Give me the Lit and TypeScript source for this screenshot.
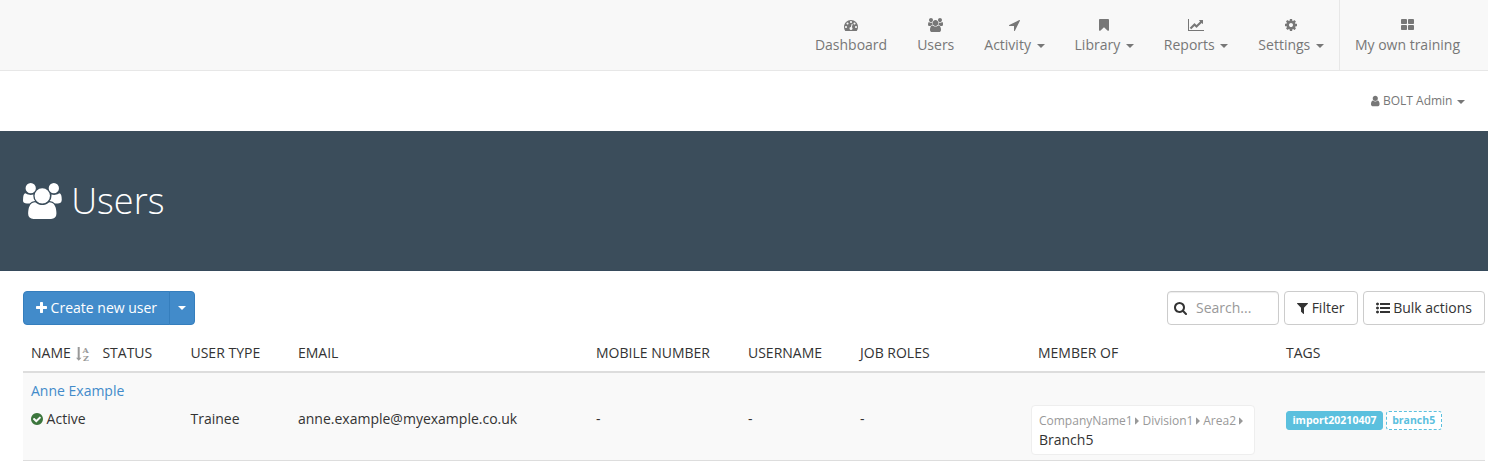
import { LitElement, html, css, svg } from "lit";
import { customElement, property } from "lit/decorators.js";

type Glyph = { box: string; w: number; d: string };

const GLYPHS: Record<string, Glyph> = {
  dashboard: { box: "0 0 1792 1792", w: 1, d: "M384 1152q0-53-37.5-90.5t-90.5-37.5-90.5 37.5-37.5 90.5 37.5 90.5 90.5 37.5 90.5-37.5 37.5-90.5zm192-448q0-53-37.5-90.5t-90.5-37.5-90.5 37.5-37.5 90.5 37.5 90.5 90.5 37.5 90.5-37.5 37.5-90.5zm428 481l101-382q6-26-7.5-48.5t-38.5-29.5-48 6.5-30 39.5l-101 382q-60 5-107 43.5t-63 98.5q-20 77 20 146t117 89 146-20 89-117q16-60-6-117t-72-91zm660-33q0-53-37.5-90.5t-90.5-37.5-90.5 37.5-37.5 90.5 37.5 90.5 90.5 37.5 90.5-37.5 37.5-90.5zm-640-640q0-53-37.5-90.5t-90.5-37.5-90.5 37.5-37.5 90.5 37.5 90.5 90.5 37.5 90.5-37.5 37.5-90.5zm448 192q0-53-37.5-90.5t-90.5-37.5-90.5 37.5-37.5 90.5 37.5 90.5 90.5 37.5 90.5-37.5 37.5-90.5zm320 448q0 261-141 483-19 29-54 29h-1402q-35 0-54-29-141-221-141-483 0-182 71-348t191-286 286-191 348-71 348 71 286 191 191 286 71 348z" },
  users: { box: "64 0 1920 1792", w: 1.0714, d: "M657 896q-162 5-265 128h-134q-82 0-138-40.5t-56-118.5q0-353 124-353 6 0 43.5 21t97.5 42.5 119 21.5q67 0 133-23-5 37-5 66 0 159 93 256zm1071 637q0 120-73 189.5t-194 69.5h-874q-121 0-194-69.5t-73-189.5q0-53 3.5-103.5t14-109 26.5-108.5 43-97.5 62-81 85.5-53.5 111.5-20q10 0 43 21.5t73 48 107 48 135 21.5 135-21.5 107-48 73-48 43-21.5q61 0 111.5 20t85.5 53.5 62 81 43 97.5 26.5 108.5 14 109 3.5 103.5zm-1024-1277q0 106-75 181t-181 75-181-75-75-181 75-181 181-75 181 75 75 181zm704 384q0 159-112.5 271.5t-271.5 112.5-271.5-112.5-112.5-271.5 112.5-271.5 271.5-112.5 271.5 112.5 112.5 271.5zm576 225q0 78-56 118.5t-138 40.5h-134q-103-123-265-128 93-97 93-256 0-29-5-66 66 23 133 23 59 0 119-21.5t97.5-42.5 43.5-21q124 0 124 353zm-128-609q0 106-75 181t-181 75-181-75-75-181 75-181 181-75 181 75 75 181z" },
  arrow: { box: "192 0 1408 1792", w: 0.7857, d: "M1593 349l-640 1280q-17 35-57 35-5 0-15-2-22-5-35.5-22.5t-13.5-39.5v-576h-576q-22 0-39.5-13.5t-22.5-35.5 4-42 29-30l1280-640q13-7 29-7 27 0 45 19 15 14 18.5 34.5t-6.5 39.5z" },
  bookmark: { box: "256 0 1280 1792", w: 0.7143, d: "M1420 128q23 0 44 9 33 13 52.5 41t19.5 62v1289q0 34-19.5 62t-52.5 41q-19 8-44 8-48 0-83-32l-441-424-441 424q-36 33-83 33-23 0-44-9-33-13-52.5-41t-19.5-62v-1289q0-34 19.5-62t52.5-41q21-9 44-9h1048z" },
  chart: { box: "0 0 2048 1792", w: 1.1429, d: "M2048 1536v128h-2048v-1536h128v1408h1920zm-128-1248v435q0 21-19.5 29.5t-35.5-7.5l-121-121-633 633q-10 10-23 10t-23-10l-233-233-416 416-192-192 585-585q10-10 23-10t23 10l233 233 464-464-121-121q-16-16-7.5-35.5t29.5-19.5h435q14 0 23 9t9 23z" },
  cog: { box: "128 0 1536 1792", w: 0.8571, d: "M1152 896q0-106-75-181t-181-75-181 75-75 181 75 181 181 75 181-75 75-181zm512-109v222q0 12-8 23t-20 13l-185 28q-19 54-39 91 35 50 107 138 10 12 10 25t-9 23q-27 37-99 108t-94 71q-12 0-26-9l-138-108q-44 23-91 38-16 136-29 186-7 28-36 28h-222q-14 0-24.5-8.5t-11.5-21.5l-28-184q-49-16-90-37l-141 107q-10 9-25 9-14 0-25-11-126-114-165-168-7-10-7-23 0-12 8-23 15-21 51-66.5t54-70.5q-27-50-41-99l-183-27q-13-2-21-12.5t-8-23.5v-222q0-12 8-23t19-13l186-28q14-46 39-92-40-57-107-138-10-12-10-24 0-10 9-23 26-36 98.5-107.5t94.5-71.5q13 0 26 10l138 107q44-23 91-38 16-136 29-186 7-28 36-28h222q14 0 24.5 8.5t11.5 21.5l28 184q49 16 90 37l142-107q9-9 24-9 13 0 25 10 129 119 165 170 7 8 7 22 0 12-8 23-15 21-51 66.5t-54 70.5q26 50 41 98l183 28q13 2 21 12.5t8 23.5z" },
  tiles: { box: "64 0 1664 1792", w: 0.9286, d: "M832 1024v384q0 52-38 90t-90 38h-512q-52 0-90-38t-38-90v-384q0-52 38-90t90-38h512q52 0 90 38t38 90zm0-768v384q0 52-38 90t-90 38h-512q-52 0-90-38t-38-90v-384q0-52 38-90t90-38h512q52 0 90 38t38 90zm896 768v384q0 52-38 90t-90 38h-512q-52 0-90-38t-38-90v-384q0-52 38-90t90-38h512q52 0 90 38t38 90zm0-768v384q0 52-38 90t-90 38h-512q-52 0-90-38t-38-90v-384q0-52 38-90t90-38h512q52 0 90 38t38 90z" },
  user: { box: "256 0 1280 1792", w: 0.7143, d: "M1536 1399q0 109-62.5 187t-150.5 78h-854q-88 0-150.5-78t-62.5-187q0-85 8.5-160.5t31.5-152 58.5-131 94-89 134.5-34.5q131 128 313 128t313-128q76 0 134.5 34.5t94 89 58.5 131 31.5 152 8.5 160.5zm-256-887q0 159-112.5 271.5t-271.5 112.5-271.5-112.5-112.5-271.5 112.5-271.5 271.5-112.5 271.5 112.5 112.5 271.5z" },
  plus: { box: "192 0 1408 1792", w: 0.7857, d: "M1600 736v192q0 40-28 68t-68 28h-416v416q0 40-28 68t-68 28h-192q-40 0-68-28t-28-68v-416h-416q-40 0-68-28t-28-68v-192q0-40 28-68t68-28h416v-416q0-40 28-68t68-28h192q40 0 68 28t28 68v416h416q40 0 68 28t28 68z" },
  search: { box: "64 0 1664 1792", w: 0.9286, d: "M1216 832q0-185-131.5-316.5t-316.5-131.5-316.5 131.5-131.5 316.5 131.5 316.5 316.5 131.5 316.5-131.5 131.5-316.5zm512 832q0 52-38 90t-90 38q-54 0-90-38l-343-342q-179 124-399 124-143 0-273.5-55.5t-225-150-150-225-55.5-273.5 55.5-273.5 150-225 225-150 273.5-55.5 273.5 55.5 225 150 150 225 55.5 273.5q0 220-124 399l343 343q37 37 37 90z" },
  filter: { box: "192 0 1408 1792", w: 0.7857, d: "M1595 295q17 41-14 70l-493 493v742q0 42-39 59-13 5-25 5-27 0-45-19l-256-256q-19-19-19-45v-486l-493-493q-31-29-14-70 17-39 59-39h1280q42 0 59 39z" },
  list: { box: "0 0 1792 1792", w: 1, d: "M384 1408q0 80-56 136t-136 56-136-56-56-136 56-136 136-56 136 56 56 136zm0-512q0 80-56 136t-136 56-136-56-56-136 56-136 136-56 136 56 56 136zm1408 416v192q0 13-9.5 22.5t-22.5 9.5h-1216q-13 0-22.5-9.5t-9.5-22.5v-192q0-13 9.5-22.5t22.5-9.5h1216q13 0 22.5 9.5t9.5 22.5zm-1408-928q0 80-56 136t-136 56-136-56-56-136 56-136 136-56 136 56 56 136zm1408 416v192q0 13-9.5 22.5t-22.5 9.5h-1216q-13 0-22.5-9.5t-9.5-22.5v-192q0-13 9.5-22.5t22.5-9.5h1216q13 0 22.5 9.5t9.5 22.5zm0-512v192q0 13-9.5 22.5t-22.5 9.5h-1216q-13 0-22.5-9.5t-9.5-22.5v-192q0-13 9.5-22.5t22.5-9.5h1216q13 0 22.5 9.5t9.5 22.5z" },
  check: { box: "128 0 1536 1792", w: 0.8571, d: "M1412 734q0-28-18-46l-91-90q-19-19-45-19t-45 19l-408 407-226-226q-19-19-45-19t-45 19l-91 90q-18 18-18 46 0 27 18 45l362 362q19 19 45 19 27 0 46-19l543-543q18-18 18-45zm252 162q0 209-103 385.5t-279.5 279.5-385.5 103-385.5-103-279.5-279.5-103-385.5 103-385.5 279.5-279.5 385.5-103 385.5 103 279.5 279.5 103 385.5z" },
  right: { box: "0 0 640 1792", w: 0.3571, d: "M576 896q0 26-19 45l-448 448q-19 19-45 19t-45-19-19-45v-896q0-26 19-45t45-19 45 19l448 448q19 19 19 45z" },
};

@customElement("ui-icon")
export class UiIcon extends LitElement {
  @property() name = "users";

  static styles = css`
    :host { display: inline-block; height: 1em; line-height: 1; vertical-align: -0.143em; }
    svg { display: block; height: 1em; fill: currentColor; }
  `;

  render() {
    const g = GLYPHS[this.name];
    return html`<svg style="width:${g.w}em" viewBox=${g.box} aria-hidden="true">${svg`<path d=${g.d}></path>`}</svg>`;
  }
}

const NAV = [
  { label: "Dashboard", icon: "dashboard", menu: false },
  { label: "Users", icon: "users", menu: false },
  { label: "Activity", icon: "arrow", menu: true },
  { label: "Library", icon: "bookmark", menu: true },
  { label: "Reports", icon: "chart", menu: true },
  { label: "Settings", icon: "cog", menu: true },
];

const HEADINGS = ["Status", "User type", "Email", "Mobile number", "Username", "Job roles", "Member of", "Tags"];

@customElement("app-root")
export class AppRoot extends LitElement {
  static styles = css`
    :host {
      display: block;
      min-height: 468px;
      background: #fff;
      color: #333;
      font: 14px/20px "Open Sans", sans-serif;
    }
    * { box-sizing: border-box; }
    .nav {
      display: flex;
      justify-content: flex-end;
      height: 71px;
      padding-right: 13px;
      background: #f8f8f8;
      border-bottom: 1px solid #e7e7e7;
      color: #777;
    }
    .item { padding: 15px; text-align: center; white-space: nowrap; }
    .item .glyph { display: block; height: 20px; }
    .own { border-left: 1px solid #e7e7e7; }
    .caret {
      display: inline-block;
      margin-left: 2px;
      vertical-align: middle;
      border-top: 4px solid;
      border-left: 4px solid transparent;
      border-right: 4px solid transparent;
    }
    .account {
      display: flex;
      justify-content: flex-end;
      align-items: center;
      height: 60px;
      padding-right: 23px;
      font-size: 12px;
      color: #777;
    }
    .account .caret { margin-left: 1.4px; }
    .banner {
      display: flex;
      align-items: center;
      height: 140px;
      padding: 0 23px;
      background: #3b4d5b;
      border-bottom: 1px solid #364a5b;
      color: #fff;
    }
    h1 { margin: 0; font-size: 36px; line-height: 40px; font-weight: 300; }
    h1 ui-icon { margin-right: 0.3px; }
    .tools { display: flex; gap: 5px; padding: 20px 3px 0 23px; }
    .btn, .search {
      display: flex;
      align-items: center;
      height: 34px;
      padding: 0 12px;
      border: 1px solid #ccc;
      border-radius: 4px;
      background: #fff;
      white-space: pre;
    }
    .split { display: flex; margin-right: auto; }
    .primary { background: #428bca; border-color: #357ebd; color: #fff; }
    .main { border-radius: 4px 0 0 4px; }
    .toggle { margin-left: -1px; padding: 0 8px; border-radius: 0 4px 4px 0; }
    .toggle .caret { margin: 0; }
    .search { width: 112px; padding: 0 6px; gap: 9px; box-shadow: inset 0 1px 1px rgba(0, 0, 0, 0.075); }
    .hint { color: #999; }
    .table { margin: 10px 3px 0 23px; }
    .grid { display: grid; grid-template-columns: 71.4px 88.1px 107.5px 298px 152px 112px 178px 248px 1fr; }
    .head { height: 38px; border-bottom: 2px solid #ddd; text-transform: uppercase; }
    .cell { padding: 8px 0 0 8px; white-space: nowrap; }
    .sort {
      display: inline-block;
      width: 16px;
      height: 18px;
      margin: -2px 0 -2px 1px;
      vertical-align: -3px;
      overflow: visible;
      fill: #999;
      font: bold 8px "DejaVu Serif", serif;
    }
    .record { height: 88px; background: #f9f9f9; border-bottom: 1px solid #ddd; }
    .name { padding: 8px; color: #428bca; }
    .values .cell { padding-top: 0; }
    .wide { grid-column: span 2; }
    .ok { color: #3c763d; }
    .values .lift { margin-top: -4px; padding-left: 1px; }
    .member {
      width: 224px;
      height: 50px;
      padding: 5px 7px;
      border: 1px solid #eee;
      border-radius: 4px;
      background: #fff;
    }
    .path { font-size: 12px; line-height: 20px; color: #999; }
    .path ui-icon { margin: 0 -0.2px 0 -0.5px; }
    .leaf { line-height: 18px; }
    .values .tags { display: flex; gap: 3px; align-items: flex-start; padding-top: 2px; }
    .tag {
      height: 19px;
      padding: 0 5.4px;
      border: 1px solid #5bc0de;
      border-radius: 3px;
      background: #5bc0de;
      color: #fff;
      font-size: 10.5px;
      line-height: 17px;
      font-weight: 700;
    }
    .soft { background: #fff; color: #5bc0de; border-style: dashed; }
  `;

  render() {
    return html`
      <nav class="nav">
        ${NAV.map((n) => html`<div class="item"><span class="glyph"><ui-icon name=${n.icon}></ui-icon></span>${n.label}${n.menu ? html` <span class="caret"></span>` : ""}</div>`)}
        <div class="item own"><span class="glyph"><ui-icon name="tiles"></ui-icon></span>My own training</div>
      </nav>
      <div class="account"><div><ui-icon name="user"></ui-icon> BOLT Admin <span class="caret"></span></div></div>
      <header class="banner"><h1><ui-icon name="users"></ui-icon> Users</h1></header>
      <div class="tools">
        <div class="split">
          <div class="btn primary main"><ui-icon name="plus"></ui-icon> Create new user</div>
          <div class="btn primary toggle"><span class="caret"></span></div>
        </div>
        <div class="search"><ui-icon name="search"></ui-icon><span class="hint">Search...</span></div>
        <div class="btn"><ui-icon name="filter"></ui-icon> Filter</div>
        <div class="btn"><ui-icon name="list"></ui-icon> Bulk actions</div>
      </div>
      <section class="table">
        <div class="grid head">
          <div class="cell">Name <svg class="sort" viewBox="-1 -2 16 18"><path d="M1.7 0h2v10.8h1.8L2.7 13.8 0 10.8h1.7z"></path><text x="6.6" y="5.6">A</text><text x="7" y="13.8">Z</text></svg></div>
          ${HEADINGS.map((h) => html`<div class="cell">${h}</div>`)}
        </div>
        <div class="record">
          <div class="name">Anne Example</div>
          <div class="grid values">
            <div class="cell wide"><ui-icon class="ok" name="check"></ui-icon> Active</div>
            <div class="cell">Trainee</div>
            <div class="cell">anne.example@myexample.co.uk</div>
            <div class="cell">-</div>
            <div class="cell">-</div>
            <div class="cell">-</div>
            <div class="cell lift">
              <div class="member">
                <div class="path">CompanyName1 <ui-icon name="right"></ui-icon> Division1 <ui-icon name="right"></ui-icon> Area2 <ui-icon name="right"></ui-icon></div>
                <div class="leaf">Branch5</div>
              </div>
            </div>
            <div class="cell tags"><span class="tag">import20210407</span><span class="tag soft">branch5</span></div>
          </div>
        </div>
      </section>
    `;
  }
}
